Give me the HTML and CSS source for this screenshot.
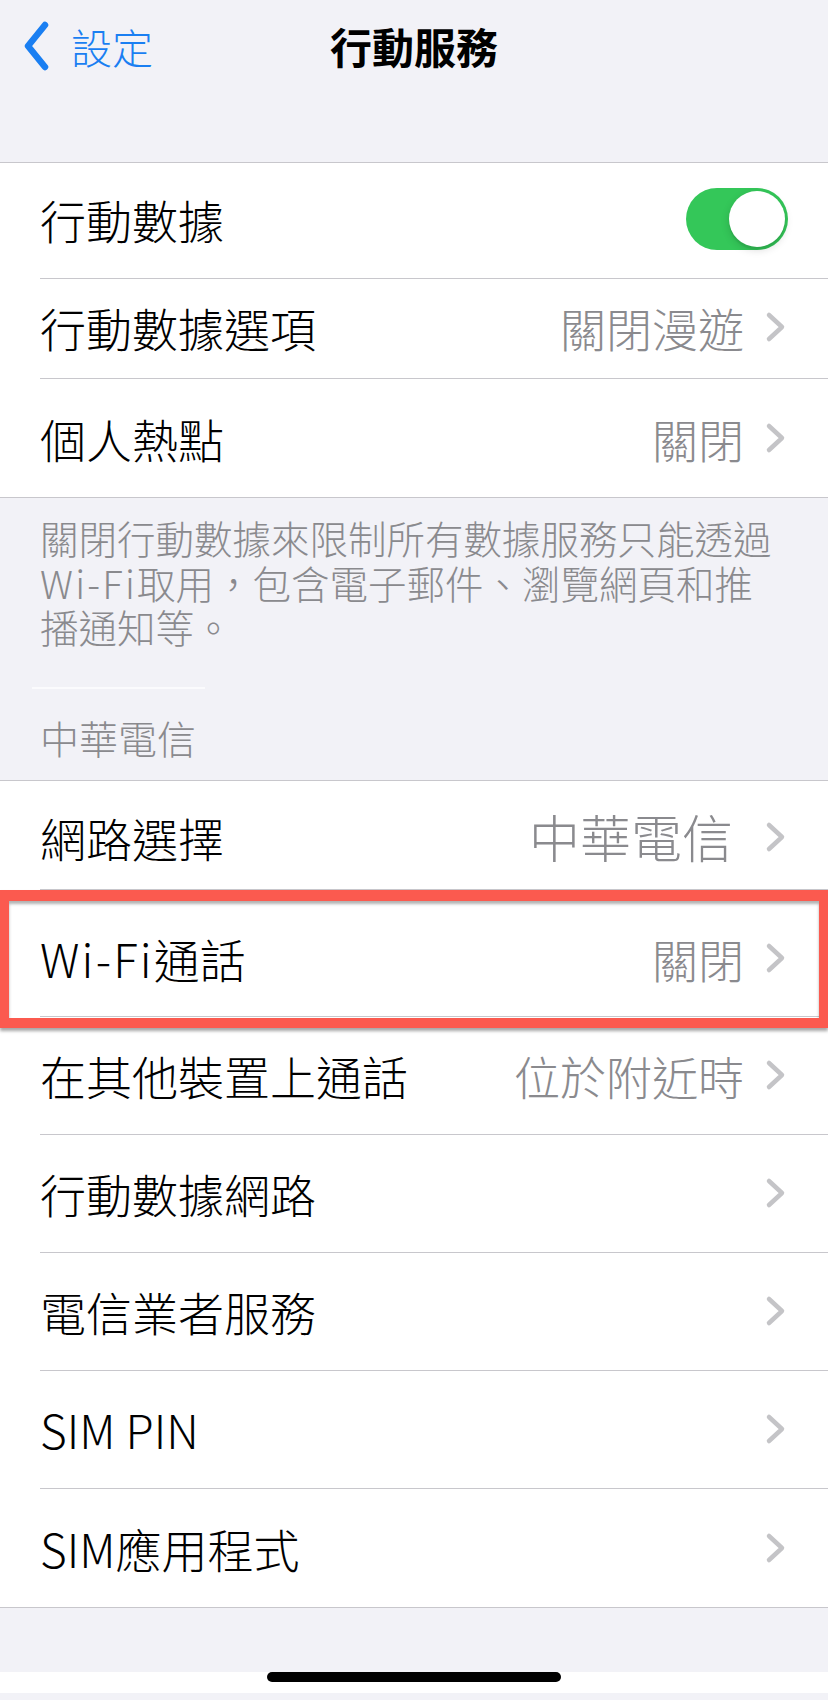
FILE: index.html
```html
<!DOCTYPE html>
<html lang="zh-Hant">
<head>
  <meta charset="utf-8">
  <title>行動服務</title>
  <link rel="stylesheet" href="styles.css">
</head>
<body>
  <div class="screen">
    <header class="nav">
      <div class="nav-row">
        <a class="back" href="#">
          <svg class="back-chevron" width="30" height="50" viewBox="0 0 30 50">
            <polyline points="24,4 7,25 24,46" />
          </svg>
          <span class="back-label">設定</span>
        </a>
        <div class="nav-title">行動服務</div>
        <div></div>
      </div>
    </header>

    <section class="group">
      <div class="row">
        <div class="row-body row-toggle">
          <span class="label">行動數據</span>
          <span class="switch"><span class="knob"></span></span>
        </div>
      </div>
      <div class="row">
        <div class="row-body row-short">
          <span class="label">行動數據選項</span>
          <span class="value">關閉漫遊</span>
          <svg class="chevron" width="22" height="32" viewBox="0 0 22 32"><polyline points="4,4 17,16 4,28" /></svg>
        </div>
      </div>
      <div class="row">
        <div class="row-body">
          <span class="label">個人熱點</span>
          <span class="value">關閉</span>
          <svg class="chevron" width="22" height="32" viewBox="0 0 22 32"><polyline points="4,4 17,16 4,28" /></svg>
        </div>
      </div>
    </section>

    <p class="group-footer">
      <span class="footer-line">關閉行動數據來限制所有數據服務只能透過</span>
      <span class="footer-line"><span class="wifi">Wi-Fi</span>取用，包含電子郵件、瀏覽網頁和推</span>
      <span class="footer-line">播通知等。</span>
    </p>

    <div class="ghost-line"></div>
    <h2 class="group-header">中華電信</h2>

    <section class="group">
      <div class="row">
        <div class="row-body row-network">
          <span class="label">網路選擇</span>
          <span class="value value-lg">中華電信</span>
          <svg class="chevron" width="22" height="32" viewBox="0 0 22 32"><polyline points="4,4 17,16 4,28" /></svg>
        </div>
      </div>
      <div class="row row-marked">
        <div class="row-body row-wifi">
          <span class="label"><span class="wifi">Wi-Fi</span>通話</span>
          <span class="value">關閉</span>
          <svg class="chevron" width="22" height="32" viewBox="0 0 22 32"><polyline points="4,4 17,16 4,28" /></svg>
        </div>
      </div>
      <div class="row">
        <div class="row-body">
          <span class="label">在其他裝置上通話</span>
          <span class="value">位於附近時</span>
          <svg class="chevron" width="22" height="32" viewBox="0 0 22 32"><polyline points="4,4 17,16 4,28" /></svg>
        </div>
      </div>
      <div class="row">
        <div class="row-body">
          <span class="label">行動數據網路</span>
          <svg class="chevron" width="22" height="32" viewBox="0 0 22 32"><polyline points="4,4 17,16 4,28" /></svg>
        </div>
      </div>
      <div class="row">
        <div class="row-body">
          <span class="label">電信業者服務</span>
          <svg class="chevron" width="22" height="32" viewBox="0 0 22 32"><polyline points="4,4 17,16 4,28" /></svg>
        </div>
      </div>
      <div class="row">
        <div class="row-body">
          <span class="label">SIM PIN</span>
          <svg class="chevron" width="22" height="32" viewBox="0 0 22 32"><polyline points="4,4 17,16 4,28" /></svg>
        </div>
      </div>
      <div class="row">
        <div class="row-body">
          <span class="label">SIM應用程式</span>
          <svg class="chevron" width="22" height="32" viewBox="0 0 22 32"><polyline points="4,4 17,16 4,28" /></svg>
        </div>
      </div>
    </section>

    <div class="bottom-space"></div>
    <div class="home"><div class="home-indicator"></div></div>
  </div>
</body>
</html>
```

FILE: styles.css
```css
body{
  margin: 0;
  background-color: #f2f2f7;
  font-family: "Noto Sans CJK TC", "Noto Sans", sans-serif;
  color: #000000;
}

.screen{
  width: 828px;
  height: 1700px;
  overflow: hidden;
  background-color: #f2f2f7;
}

/* navigation bar */
.nav{
  height: 162px;
  border-bottom: 1px solid #c8c7cc;
}

.nav-row{
  height: 92px;
  display: grid;
  grid-template-columns: 1fr auto 1fr;
  align-items: center;
}

.back{
  display: flex;
  align-items: center;
  padding-left: 21px;
  color: #1a7ff2;
  text-decoration: none;
}

.back-chevron polyline{
  fill: none;
  stroke: #1a7ff2;
  stroke-width: 6.5;
  stroke-linecap: round;
  stroke-linejoin: round;
}

.back-label{
  margin-left: 20px;
  font-size: 41px;
  font-weight: 300;
  line-height: 1;
}

.nav-title{
  font-size: 42px;
  font-weight: 700;
  line-height: 1;
}

/* grouped table */
.group{
  background-color: #ffffff;
  border-bottom: 1px solid #c8c7cc;
}

.group-header + .group{
  border-top: 1px solid #c8c7cc;
}

.row{
  padding-left: 40px;
}

.row-body{
  box-sizing: border-box;
  height: 118px;
  display: flex;
  align-items: center;
  padding-right: 41px;
  border-bottom: 1px solid #c8c7cc;
}

.row:last-child .row-body{
  border-bottom: 0;
}

.row-toggle{ height: 116px; padding-bottom: 4px; }
.row-short{ height: 100px; padding-bottom: 4px; }
.row-network{ height: 109px; padding-top: 4px; }
.row-wifi{ height: 127px; padding-top: 10px; }

.label{
  flex: 1;
  font-size: 46px;
  font-weight: 300;
  line-height: 1;
  white-space: nowrap;
}

.wifi{
  letter-spacing: 2.2px;
}

.value{
  margin-right: 21px;
  font-size: 46px;
  font-weight: 300;
  line-height: 1;
  color: #8a8a8e;
  white-space: nowrap;
}

.value-lg{
  font-size: 51px;
  margin-right: 32px;
}

.chevron polyline{
  fill: none;
  stroke: #c4c4c7;
  stroke-width: 4.5;
  stroke-linecap: round;
  stroke-linejoin: round;
}

.switch{
  box-sizing: border-box;
  width: 102px;
  height: 62px;
  padding: 3px;
  margin-right: -1px;
  border-radius: 31px;
  background-color: #34c759;
  display: flex;
  justify-content: flex-end;
}

.knob{
  width: 56px;
  height: 56px;
  border-radius: 50%;
  background-color: #ffffff;
  box-shadow: 0 3px 8px rgba(0, 0, 0, 0.15), 0 3px 1px rgba(0, 0, 0, 0.06);
}

/* footer and header texts */
.group-footer{
  margin: 0;
  padding: 17px 40px 0;
  font-size: 38.5px;
  font-weight: 300;
  color: #8a8a8e;
}

.footer-line{
  display: block;
  height: 44.5px;
  line-height: 44.5px;
  white-space: nowrap;
}

.ghost-line{
  width: 173px;
  height: 2px;
  margin: 38px 0 0 32px;
  background-color: #fbfbfd;
}

.group-header{
  margin: 26px 0 0;
  padding: 0 40px 21px;
  font-size: 39px;
  font-weight: 300;
  line-height: 44px;
  color: #8a8a8e;
}

/* red annotation frame */
.row-marked{
  position: relative;
}

.row-marked::after{
  content: "";
  position: absolute;
  top: 0;
  left: 0;
  right: 0;
  bottom: -11px;
  border-style: solid;
  border-color: #fb5a4f;
  border-width: 11px 9px 10px 9px;
  box-shadow: 0 3px 3px rgba(0, 0, 0, 0.35), inset 0 3px 3px rgba(0, 0, 0, 0.3);
}

/* bottom */
.bottom-space{
  box-sizing: border-box;
  height: 70px;
  border-bottom: 1px solid #c8c7cc;
}

.home{
  height: 21px;
  background-color: #ffffff;
}

.home-indicator{
  width: 294px;
  height: 10px;
  margin: -6px auto 0;
  border-radius: 5px;
  background-color: #000000;
}
```
